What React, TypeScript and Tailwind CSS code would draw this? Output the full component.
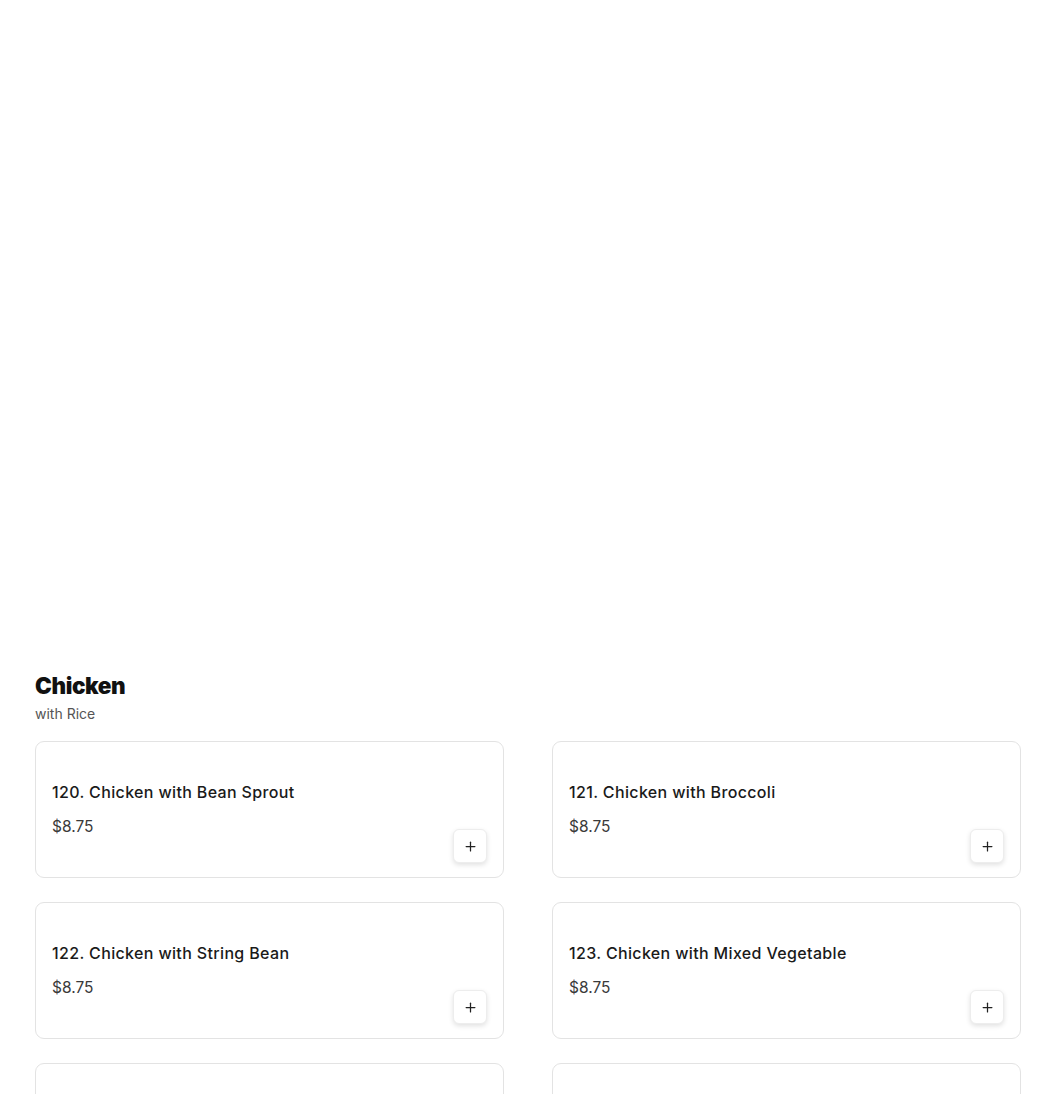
import { Plus } from 'lucide-react'

const items = [
  { id: 120, name: 'Chicken with Bean Sprout', price: '$8.75' },
  { id: 121, name: 'Chicken with Broccoli', price: '$8.75' },
  { id: 122, name: 'Chicken with String Bean', price: '$8.75' },
  { id: 123, name: 'Chicken with Mixed Vegetable', price: '$8.75' },
  { id: 124, name: 'Chicken with Snow Peas', price: '$8.75' },
  { id: 125, name: 'Chicken with Garlic Sauce', price: '$8.75' },
]

function ItemCard({ id, name, price }: { id: number; name: string; price: string }) {
  return (
    <div className="h-[137px] rounded-[9px] border border-[#e3e3e3] bg-white pl-4 pr-4 pt-[40px] pb-[14px] flex">
      <div className="flex-1 min-w-0">
        <p className="text-[16px] leading-5 font-medium text-[#1a1a1a] tracking-[0.35px] whitespace-nowrap">
          {id}. {name}
        </p>
        <p className="text-[15.5px] leading-5 text-[#3a3a3a] mt-[15px]">{price}</p>
      </div>
      <button className="self-end w-[34px] h-[34px] rounded-[6px] bg-white border border-[#ededed] shadow-[0_2px_5px_rgba(0,0,0,0.12)] flex items-center justify-center text-[#222]">
        <Plus size={15} strokeWidth={2} />
      </button>
    </div>
  )
}

export default function App() {
  return (
    <div className="h-[1094px] overflow-hidden bg-white font-['Inter',sans-serif] text-[#111]">
      <div className="pt-[672px] pl-[35px] pr-[29px]">
        <h2 className="text-[22.5px] leading-7 font-black tracking-[-0.4px] text-[#111]">Chicken</h2>
        <p className="text-[14px] leading-5 text-[#555] mt-[4px]">with Rice</p>
        <div className="grid grid-cols-2 gap-x-[48px] gap-y-[24px] mt-[17px]">
          {items.map((it) => (
            <ItemCard key={it.id} {...it} />
          ))}
        </div>
      </div>
    </div>
  )
}
